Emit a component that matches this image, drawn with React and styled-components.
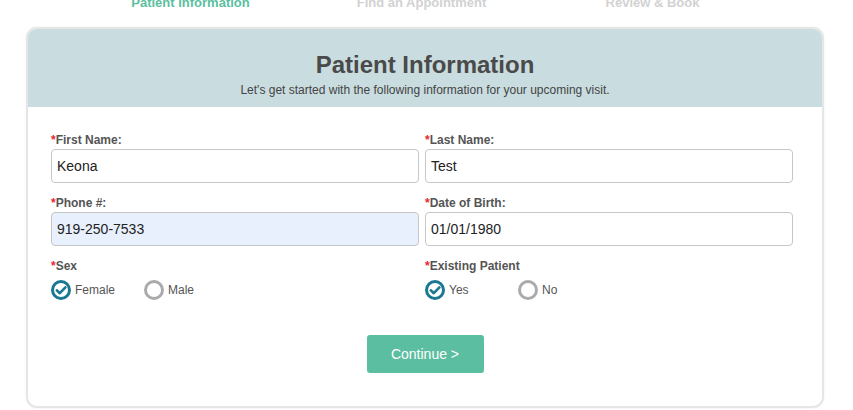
import React, { useState } from "react";
import styled, { createGlobalStyle } from "styled-components";

const GlobalStyle = createGlobalStyle`
  body {
    margin: 0;
    background: #fff;
    font-family: "Liberation Sans", Arial, sans-serif;
    overflow: hidden;
  }
`;

const Page = styled.div`
  width: 853px;
  height: 410px;
  overflow: hidden;
`;

const Steps = styled.div`
  display: grid;
  grid-template-columns: repeat(3, 231px);
  margin: -5px 0 0 75px;
  height: 32px;
`;

const Step = styled.div`
  text-align: center;
  font-size: 13px;
  font-weight: bold;
  line-height: 16px;
  color: ${(p) => (p.active ? "#5bbf9f" : "#d2d2d2")};
`;

const Card = styled.section`
  margin: 0 29px 0 26px;
  border: 2px solid #e6e6e6;
  border-radius: 11px;
  overflow: hidden;
  background: #fff;
  box-shadow: 0 0 2px rgba(0, 0, 0, 0.08);
`;

const Header = styled.header`
  background: #c9dcdf;
  height: 78px;
  text-align: center;
  padding-top: 22px;
  box-sizing: border-box;
  color: #4a4a4a;

  h1 {
    margin: 0;
    font-size: 24px;
    line-height: 28px;
    font-weight: bold;
  }
  p {
    margin: 4px 0 0;
    font-size: 12px;
    line-height: 14px;
    color: #444;
  }
`;

const Body = styled.div`
  padding: 26px 29px 33px 23px;
`;

const Grid = styled.div`
  display: grid;
  grid-template-columns: 1fr 1fr;
  column-gap: 6px;
  row-gap: 13px;
`;

const Field = styled.div`
  display: flex;
  flex-direction: column;
`;

const Label = styled.label`
  font-size: 12px;
  font-weight: bold;
  line-height: 14px;
  color: #555;
  margin-bottom: 2px;

  span {
    color: #e8252e;
  }
`;

const Input = styled.input`
  height: 34px;
  box-sizing: border-box;
  border: 1px solid #c6c6c6;
  border-radius: 4px;
  padding: 0 5px;
  font-family: "Liberation Sans", Arial, sans-serif;
  font-size: 14px;
  color: #222;
  background: ${(p) => (p.filled ? "#e8f0fe" : "#fff")};
  outline: none;
`;

const RadioRow = styled.div`
  display: flex;
  margin-top: 5px;
`;

const Option = styled.label`
  display: flex;
  align-items: center;
  min-width: 93px;
  font-size: 12px;
  color: #555;
  cursor: pointer;

  svg {
    margin-right: 4px;
  }
`;

const Actions = styled.div`
  display: flex;
  justify-content: center;
  margin: 35px -29px 0 -23px;
`;

const Button = styled.button`
  width: 117px;
  height: 38px;
  border: none;
  border-radius: 3px;
  background: #5cbea0;
  color: #fff;
  font-family: "Liberation Sans", Arial, sans-serif;
  font-size: 14px;
  cursor: pointer;
`;

const RadioIcon = ({ checked }) => (
  <svg width="20" height="20" viewBox="0 0 20 20">
    <circle
      cx="10"
      cy="10"
      r="8.5"
      fill="#fff"
      stroke={checked ? "#1a7892" : "#aaaaaa"}
      strokeWidth="3"
    />
    {checked && (
      <path
        d="M5.8 10.3 L8.8 13.2 L14.4 7.4"
        fill="none"
        stroke="#1a7892"
        strokeWidth="2.6"
        strokeLinecap="round"
        strokeLinejoin="round"
      />
    )}
  </svg>
);

const RadioGroup = ({ options, value, onChange }) => (
  <RadioRow>
    {options.map((o) => (
      <Option key={o} onClick={() => onChange(o)}>
        <RadioIcon checked={value === o} />
        {o}
      </Option>
    ))}
  </RadioRow>
);

const App = () => {
  const [sex, setSex] = useState("Female");
  const [existing, setExisting] = useState("Yes");

  return (
    <Page>
      <GlobalStyle />
      <Steps>
        <Step active>Patient Information</Step>
        <Step>Find an Appointment</Step>
        <Step>Review &amp; Book</Step>
      </Steps>
      <Card>
        <Header>
          <h1>Patient Information</h1>
          <p>Let's get started with the following information for your upcoming visit.</p>
        </Header>
        <Body>
          <Grid>
            <Field>
              <Label><span>*</span>First Name:</Label>
              <Input defaultValue="Keona" />
            </Field>
            <Field>
              <Label><span>*</span>Last Name:</Label>
              <Input defaultValue="Test" />
            </Field>
            <Field>
              <Label><span>*</span>Phone #:</Label>
              <Input filled defaultValue="919-250-7533" />
            </Field>
            <Field>
              <Label><span>*</span>Date of Birth:</Label>
              <Input defaultValue="01/01/1980" />
            </Field>
            <Field>
              <Label><span>*</span>Sex</Label>
              <RadioGroup options={["Female", "Male"]} value={sex} onChange={setSex} />
            </Field>
            <Field>
              <Label><span>*</span>Existing Patient</Label>
              <RadioGroup options={["Yes", "No"]} value={existing} onChange={setExisting} />
            </Field>
          </Grid>
          <Actions>
            <Button>Continue &gt;</Button>
          </Actions>
        </Body>
      </Card>
    </Page>
  );
};

export default App;
